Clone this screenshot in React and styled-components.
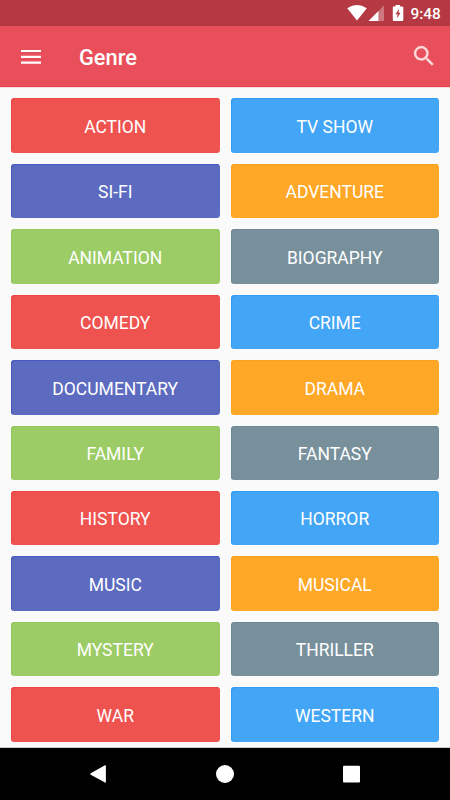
import React from "react";
import styled, { createGlobalStyle } from "styled-components";

const GlobalStyle = createGlobalStyle`
  * { box-sizing: border-box; }
  body { margin: 0; background: #fafafa; overflow: hidden; }
`;

const Screen = styled.div`
  width: 450px;
  height: 800px;
  display: flex;
  flex-direction: column;
  background: #fafafa;
  font-family: Roboto, sans-serif;
  overflow: hidden;
`;

const StatusBar = styled.header`
  height: 26px;
  flex: none;
  display: flex;
  align-items: center;
  justify-content: flex-end;
  padding-right: 9px;
  background: #b53942;
  color: #fff;
`;

const StatusIcons = styled.svg`
  width: 60px;
  height: 26px;
  margin-right: 4.5px;
`;

const Clock = styled.time`
  width: 30.5px;
  font-size: 15.4px;
  line-height: 26px;
  font-weight: 500;
  white-space: nowrap;
  padding-top: 1px;
`;

const AppBar = styled.div`
  height: 61px;
  flex: none;
  display: flex;
  align-items: center;
  padding: 0 16.5px 0 21px;
  background: #e94f5b;
  border-bottom: 1px solid #e3424e;
  color: #fff;
`;

const MenuIcon = styled.svg`
  width: 20px;
  height: 14px;
  margin-top: 2px;
`;

const Title = styled.h1`
  flex: 1;
  margin: 4px 0 0 38px;
  font-size: 21.8px;
  line-height: 26px;
  font-weight: 500;
`;

const SearchIcon = styled.svg`
  width: 19.6px;
  height: 19.6px;
`;

const GenreGrid = styled.main`
  flex: 1;
  display: grid;
  grid-template-columns: 1fr 1fr;
  grid-auto-rows: 54.42px;
  gap: 11px;
  padding: 11.49px 11px 0;
  box-shadow: inset 0 1px #f9dcde;
  border-bottom: 1px solid #c9c9c9;
`;

const GenreCard = styled.button`
  border: 0;
  border-radius: 3.5px;
  background: ${(p) => p.$color};
  box-shadow: inset 1px 1px ${(p) => p.$edge};
  color: #fff;
  font-family: inherit;
  font-size: 17.5px;
  line-height: 20px;
  padding: 2.4px 0 0;
`;

const NavBar = styled.nav`
  height: 52px;
  flex: none;
  display: flex;
  align-items: center;
  justify-content: space-between;
  padding: 0 90px;
  background: #000;
`;

const NavIcon = styled.svg`
  width: 18px;
  height: 18px;
`;

const palette = {
  red: ["#ef5350", "#ee4542"],
  blue: ["#42a5f5", "#309cf4"],
  indigo: ["#5c6bc0", "#4558b9"],
  orange: ["#ffa726", "#fda11b"],
  green: ["#9ccc65", "#93c65b"],
  slate: ["#78909c", "#6e8996"],
};

const genres = [
  ["ACTION", "red"], ["TV SHOW", "blue"],
  ["SI-FI", "indigo"], ["ADVENTURE", "orange"],
  ["ANIMATION", "green"], ["BIOGRAPHY", "slate"],
  ["COMEDY", "red"], ["CRIME", "blue"],
  ["DOCUMENTARY", "indigo"], ["DRAMA", "orange"],
  ["FAMILY", "green"], ["FANTASY", "slate"],
  ["HISTORY", "red"], ["HORROR", "blue"],
  ["MUSIC", "indigo"], ["MUSICAL", "orange"],
  ["MYSTERY", "green"], ["THRILLER", "slate"],
  ["WAR", "red"], ["WESTERN", "blue"],
];

export default function App() {
  return (
    <>
      <GlobalStyle />
      <Screen>
        <StatusBar>
          <StatusIcons viewBox="346 0 60 26" fill="#fff">
            <path d="M347.2 8.2Q357 1.6 366.8 8.2L357 20.4Z" />
            <path d="M384 5.5V21H368.6Z" fillOpacity=".32" />
            <path d="M378.4 11.1V21H368.6Z" />
            <path
              fillRule="evenodd"
              d="M395.5 4.9h4.6v1.6h2.2q1 0 1 1V20q0 1-1 1h-8.5q-1 0-1-1V7.5q0-1 1-1h1.7zM399.2 8.8l-3.8 5.5h2.3l-.9 4.1l3.8-5.6h-2.1z"
            />
          </StatusIcons>
          <Clock>9:48</Clock>
        </StatusBar>
        <AppBar>
          <MenuIcon viewBox="0 0 20 14" fill="#fff" aria-label="Menu">
            <path d="M0 0h20v2.1H0zM0 5.8h20v2.2H0zM0 11.6h20v2.1H0z" />
          </MenuIcon>
          <Title>Genre</Title>
          <SearchIcon
            viewBox="3 3 17.49 17.49"
            fill="#fbdcde"
            stroke="#fbdcde"
            strokeWidth=".2"
            overflow="visible"
            aria-label="Search"
          >
            <path d="M15.5 14h-.79l-.28-.27A6.471 6.471 0 0 0 16 9.5 6.5 6.5 0 1 0 9.5 16c1.61 0 3.09-.59 4.23-1.57l.27.28v.79l5 4.99L20.49 19zm-6 0C7.01 14 5 11.99 5 9.5S7.01 5 9.5 5 14 7.01 14 9.5 11.99 14 9.5 14z" />
          </SearchIcon>
        </AppBar>
        <GenreGrid>
          {genres.map(([name, tone]) => (
            <GenreCard key={name} $color={palette[tone][0]} $edge={palette[tone][1]}>
              {name}
            </GenreCard>
          ))}
        </GenreGrid>
        <NavBar>
          <NavIcon viewBox="0 0 18 18" fill="#fff" aria-label="Back">
            <path d="M0.7 8.2L15 0.3Q15.9 0 15.9 .9V17.1Q15.9 18 15 17.6L.7 9.8Q0 9 .7 8.2Z" />
          </NavIcon>
          <NavIcon viewBox="0 0 18 18" fill="#fff" aria-label="Home">
            <circle cx="9" cy="9" r="9" />
          </NavIcon>
          <NavIcon viewBox="0 0 18 18" fill="#fff" aria-label="Recent apps">
            <rect x="1" y=".7" width="17" height="16.8" rx="1" />
          </NavIcon>
        </NavBar>
      </Screen>
    </>
  );
}
